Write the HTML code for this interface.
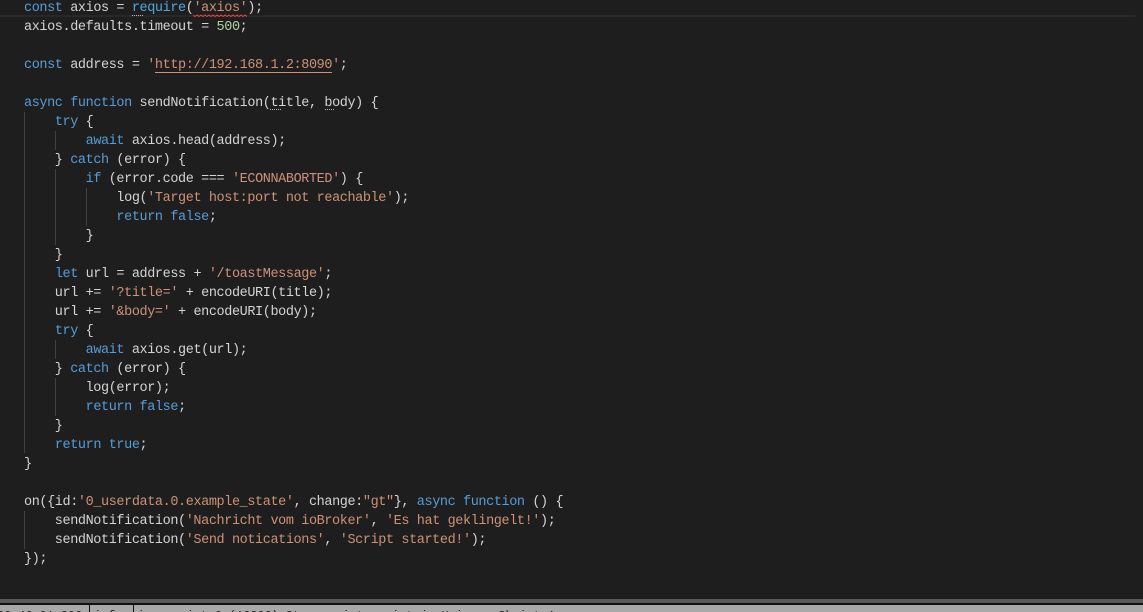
<!DOCTYPE html>
<html>
<head>
<meta charset="utf-8">
<style>
html,body{margin:0;padding:0;background:#1e1e1e;}
#root{position:relative;width:1143px;height:612px;overflow:hidden;background:#1e1e1e;}
#hl{position:absolute;left:0;top:15px;width:1135px;height:2px;background:#282828;}
pre{position:absolute;left:24px;top:-1px;margin:0;font:13.5px/19px "Liberation Mono",monospace;letter-spacing:-.4px;color:#d4d4d4;white-space:pre;}
.k{color:#569cd6}.s{color:#ce9178}.n{color:#b5cea8}.r{color:#4fa8dc}
.g{position:absolute;width:1px;background:#404040;}
.d{position:absolute;height:0;border-top:1px dotted #bbb;}
#u{position:absolute;left:155px;top:72px;width:177px;height:1px;background:#ce9178;}
#bar{position:absolute;left:0;top:599px;width:1143px;height:4px;background:#5a5a5a;}
#blk{position:absolute;left:0;top:603px;width:1143px;height:2px;background:#111;}
#log{position:absolute;left:0;top:605px;width:1143px;height:7px;background:#a9a9a9;overflow:hidden;}
#log span{position:absolute;top:3px;font:12px/16px "Liberation Mono",monospace;letter-spacing:-.12px;color:#222;white-space:pre;}
.sep{position:absolute;top:0;width:1px;height:7px;background:#111;}
svg{position:absolute;left:0;top:0;}
</style>
</head>
<body>
<div id="root">
<div id="hl"></div>
<div class="g" style="left:24px;top:112px;height:341px"></div>
<div class="g" style="left:55px;top:131px;height:19px"></div>
<div class="g" style="left:55px;top:169px;height:76px"></div>
<div class="g" style="left:55px;top:340px;height:19px"></div>
<div class="g" style="left:55px;top:378px;height:38px"></div>
<div class="g" style="left:86px;top:188px;height:38px"></div>
<div class="g" style="left:24px;top:511px;height:38px"></div>
<pre><span class="k">const</span> axios = <span class="r">require</span>(<span class="s">'axios'</span>);
axios.defaults.timeout = <span class="n">500</span>;

<span class="k">const</span> address = <span class="s">'http://192.168.1.2:8090'</span>;

<span class="k">async</span> <span class="k">function</span> sendNotification(title, body) {
    <span class="k">try</span> {
        <span class="k">await</span> axios.head(address);
    } <span class="k">catch</span> (error) {
        <span class="k">if</span> (error.code === <span class="s">'ECONNABORTED'</span>) {
            log(<span class="s">'Target host:port not reachable'</span>);
            <span class="k">return</span> <span class="k">false</span>;
        }
    }
    <span class="k">let</span> url = address + <span class="s">'/toastMessage'</span>;
    url += <span class="s">'?title='</span> + encodeURI(title);
    url += <span class="s">'&amp;body='</span> + encodeURI(body);
    <span class="k">try</span> {
        <span class="k">await</span> axios.get(url);
    } <span class="k">catch</span> (error) {
        log(error);
        <span class="k">return</span> <span class="k">false</span>;
    }
    <span class="k">return</span> <span class="k">true</span>;
}

on({id:<span class="s">'0_userdata.0.example_state'</span>, change:<span class="s">"gt"</span>}, <span class="k">async</span> <span class="k">function</span> () {
    sendNotification(<span class="s">'Nachricht vom ioBroker'</span>, <span class="s">'Es hat geklingelt!'</span>);
    sendNotification(<span class="s">'Send notications'</span>, <span class="s">'Script started!'</span>);
});</pre>
<div id="u"></div>
<div class="d" style="left:132px;top:15px;width:11px"></div>
<div class="d" style="left:270px;top:109px;width:11px"></div>
<div class="d" style="left:325px;top:109px;width:9px"></div>
<svg width="1143" height="30"><path d="M193 15 l2 1.5 l2 -1.5 l2 1.5 l2 -1.5 l2 1.5 l2 -1.5 l2 1.5 l2 -1.5 l2 1.5 l2 -1.5 l2 1.5 l2 -1.5 l2 1.5 l2 -1.5 l2 1.5 l2 -1.5 l2 1.5 l2 -1.5 l2 1.5 l2 -1.5 l2 1.5 l2 -1.5 l2 1.5 l2 -1.5 l2 1.5 l2 -1.5 l2 1.5" fill="none" stroke="#e2443f" stroke-width="1"/></svg>
<div id="bar"></div>
<div id="blk"></div>
<div id="log">
<span style="left:-3px">20:46:01.306</span>
<div class="sep" style="left:89px"></div>
<span style="left:94px">info</span>
<div class="sep" style="left:133px"></div>
<span style="left:137px">javascript.0 (12306) Stop script script.js.Heim... Skript 1</span>
</div>
</div>
</body>
</html>
